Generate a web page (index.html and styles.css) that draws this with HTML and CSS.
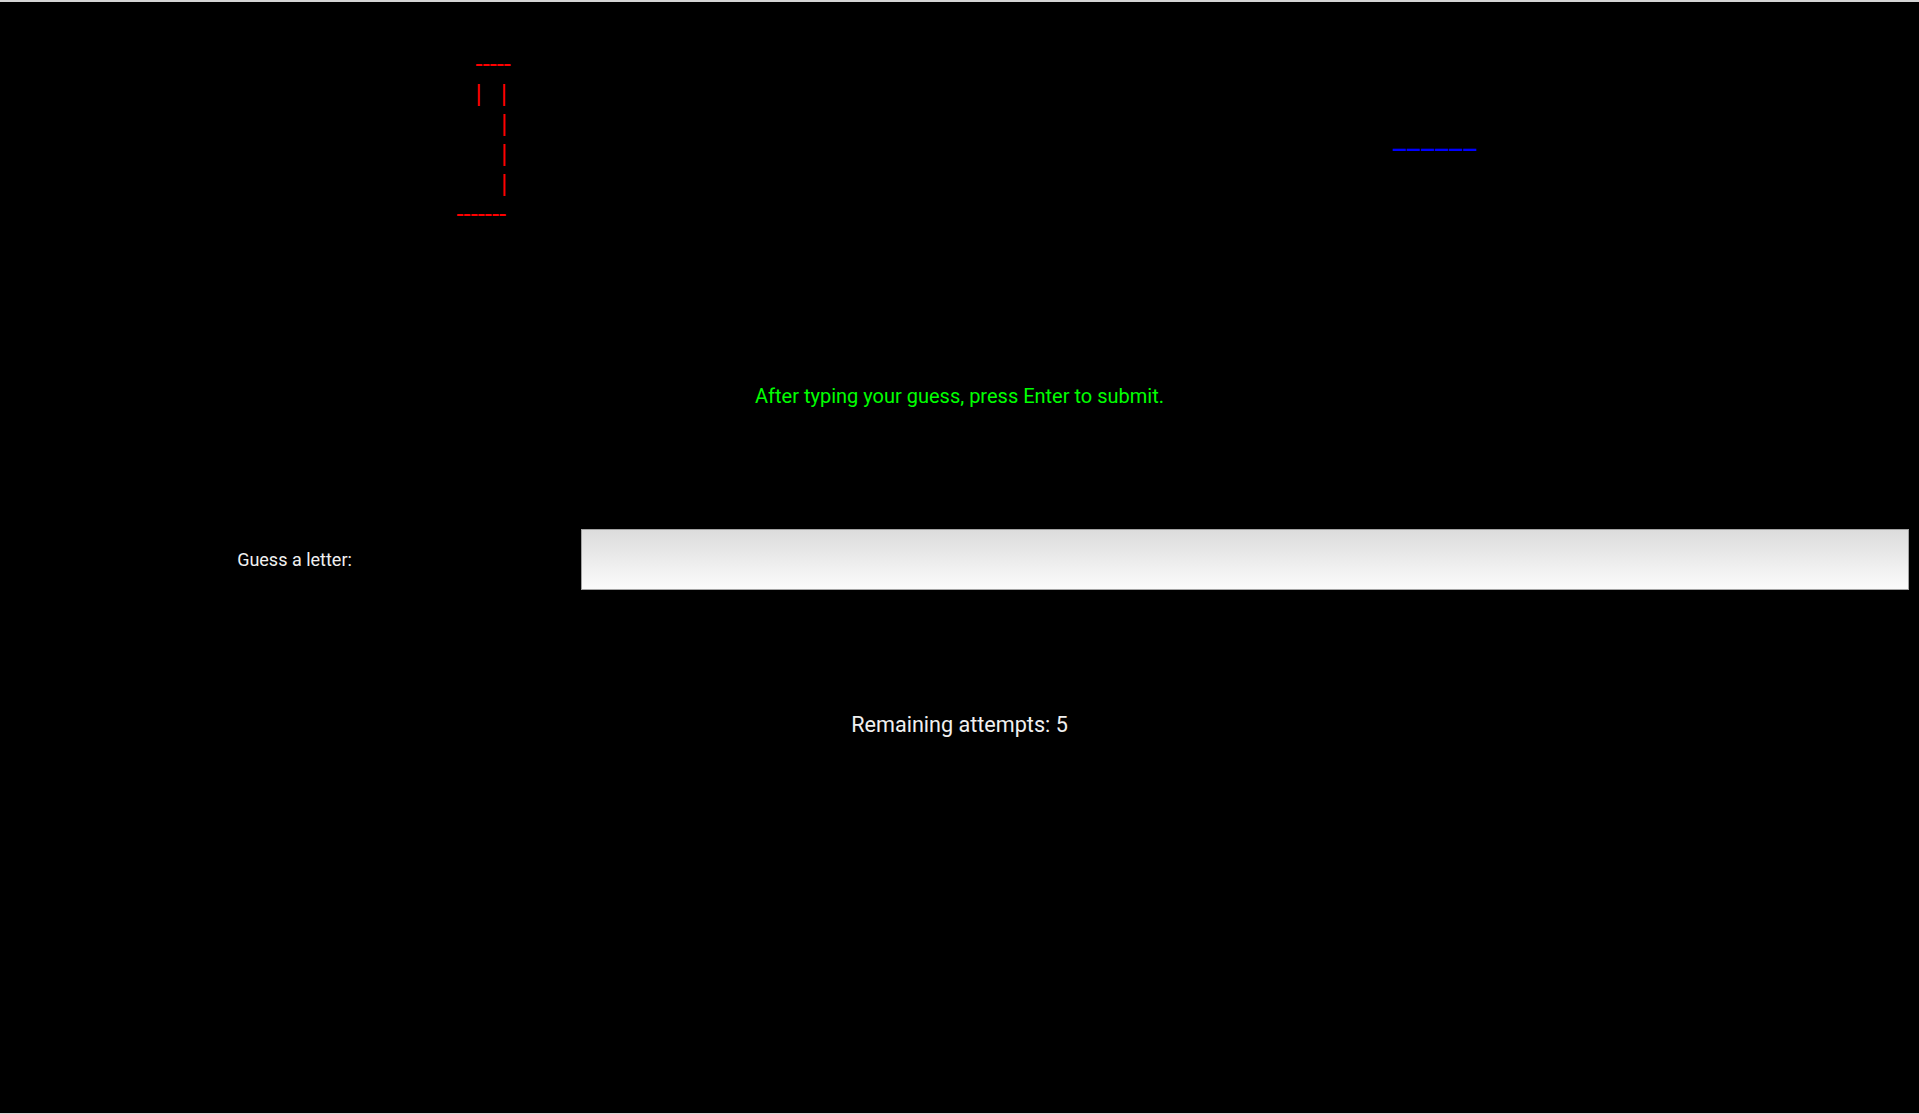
FILE: index.html
```html
<!DOCTYPE html>
<html lang="en">
<head>
<meta charset="utf-8">
<title>Hangman</title>
<link rel="stylesheet" href="styles.css">
</head>
<body>
<main class="game">
  <section class="board">
    <div class="gallows-cell">
<pre class="gallows">   -----
   |   |
       |
       |
       |
-------</pre>
    </div>
    <div class="word-cell">
      <span class="word">______</span>
    </div>
  </section>
  <p class="hint">After typing your guess, press Enter to submit.</p>
  <div class="guess-row">
    <label class="guess-label" for="guess">Guess a letter:</label>
    <input class="guess-input" id="guess" type="text" maxlength="1">
  </div>
  <p class="attempts">Remaining attempts: 5</p>
</main>
</body>
</html>
```
FILE: styles.css
```css
html {
  background: #d4d4d4;
  height: 100%;
}
body {
  margin: 2px 0 1px;
  padding: 0 8px;
  background: #000;
  min-height: calc(100vh - 3px);
  box-sizing: border-box;
  font-family: Roboto, "Liberation Sans", sans-serif;
  color: #f0f0f0;
}
.game {
  display: flex;
  flex-direction: column;
  padding-top: 47px;
}
.board {
  display: grid;
  grid-template-columns: 1fr 1fr;
  align-items: center;
}
.gallows-cell,
.word-cell {
  text-align: center;
}
.gallows {
  display: inline-block;
  margin: 0;
  text-align: left;
  font-family: Roboto, "Liberation Sans", sans-serif;
  font-size: 25.6px;
  line-height: 30px;
  color: #ff0000;
}
.word {
  display: inline-block;
  font-size: 29px;
  line-height: 30px;
  letter-spacing: 1px;
  color: #0000ff;
}
.hint {
  margin: 155px 0 0;
  text-align: center;
  font-size: 20px;
  color: #00ff00;
}
.guess-row {
  display: grid;
  grid-template-columns: 573px 1328px;
  align-items: center;
  margin-top: 121px;
}
.guess-label {
  text-align: center;
  font-size: 18px;
  color: #f0f0f0;
}
.guess-input {
  box-sizing: border-box;
  width: 100%;
  height: 61px;
  margin: 0;
  border: 1px solid #a3a3a3;
  background: linear-gradient(#dcdcdc, #fbfbfb);
  font-size: 20px;
  padding: 0 10px;
  outline: none;
}
.attempts {
  margin: 122px 0 0;
  text-align: center;
  font-size: 21.6px;
  color: #f0f0f0;
}
```
